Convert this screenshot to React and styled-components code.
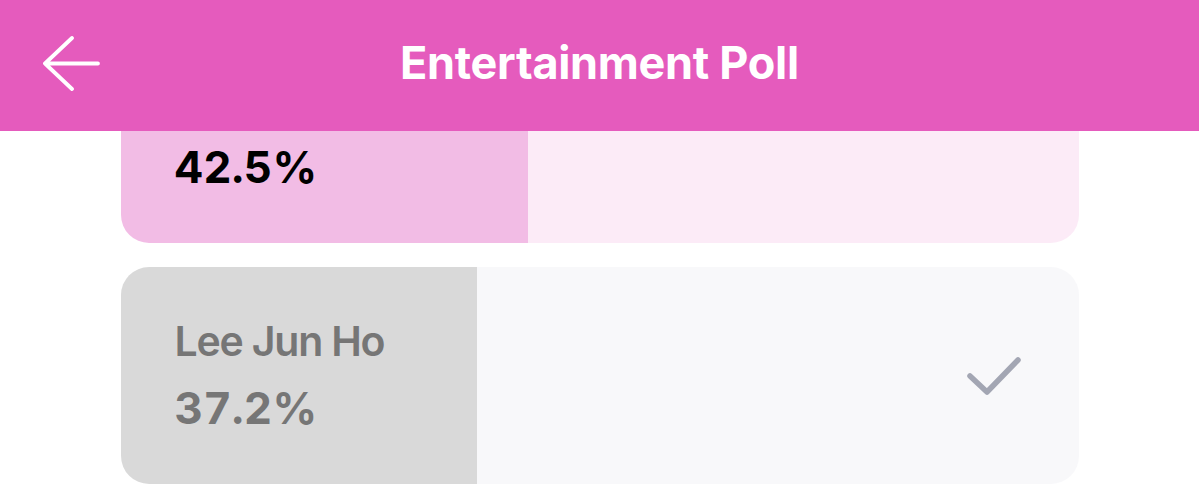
import styled, { createGlobalStyle } from "styled-components";

const GlobalStyle = createGlobalStyle`
    body {
        margin: 0;
        background: #ffffff;
        font-family: Inter, "Noto Sans", sans-serif;
    }
`;

const options = [
    { name: "Kim Soo Hyun", percent: 42.5, selected: true },
    { name: "Lee Jun Ho", percent: 37.2, selected: false },
];

const BackArrow = () => (
    <svg width="59" height="55" viewBox="0 0 59 55" fill="none">
        <path
            d="M2 27.5H55M29 2L2 27.5L29 53"
            stroke="#ffffff"
            strokeWidth="3.8"
            strokeLinecap="round"
            strokeLinejoin="round"
        />
    </svg>
);

const Check = () => (
    <svg width="56" height="40" viewBox="0 0 56 40" fill="none">
        <polyline
            points="4,20 21,36 52,4"
            stroke="#a3a6b3"
            strokeWidth="5.5"
            strokeLinecap="round"
            strokeLinejoin="round"
        />
    </svg>
);

const PollCard = ({ name, percent, selected }) => (
    <Card $percent={percent} $selected={selected}>
        <TextBlock $selected={selected}>
            <Name>{name}</Name>
            <Percent>{percent.toFixed(1)}%</Percent>
        </TextBlock>
        {!selected && <Check />}
    </Card>
);

const App = () => {
    return (
        <>
            <GlobalStyle />
            <Header>
                <BackButton aria-label="Back">
                    <BackArrow />
                </BackButton>
                <Title>Entertainment Poll</Title>
                <span />
            </Header>
            <List>
                {options.map((o) => (
                    <PollCard key={o.name} {...o} />
                ))}
            </List>
        </>
    );
};

export default App;

const Header = styled.header`
    position: fixed;
    top: 0;
    left: 0;
    right: 0;
    z-index: 10;
    height: 131px;
    background: #e55bbd;
    display: grid;
    grid-template-columns: 1fr auto 1fr;
    align-items: center;
`;

const BackButton = styled.button`
    justify-self: start;
    display: flex;
    padding: 0 0 4px 43px;
    border: none;
    background: none;
    cursor: pointer;
`;

const Title = styled.h1`
    margin: 0 0 6px 0;
    color: #ffffff;
    font-size: 45px;
    font-weight: 700;
    letter-spacing: -0.3px;
`;

const List = styled.main`
    display: flex;
    flex-direction: column;
    gap: 24px;
    width: 958px;
    margin: 0 auto;
    padding: 26px 0 12px 0;
`;

const Card = styled.div`
    height: 217px;
    border-radius: 28px;
    display: flex;
    align-items: center;
    justify-content: space-between;
    padding: 0 57px 0 54px;
    box-sizing: border-box;
    background: ${({ $percent, $selected }) => {
        const fill = $selected ? "#f2bce5" : "#d9d9d9";
        const rest = $selected ? "#fcebf7" : "#f8f8fa";
        return `linear-gradient(to right, ${fill} 0 ${$percent}%, ${rest} ${$percent}% 100%)`;
    }};
`;

const TextBlock = styled.div`
    display: flex;
    flex-direction: column;
    line-height: 67px;
    margin-top: -1px;
    color: ${({ $selected }) => ($selected ? "#000000" : "#767676")};
`;

const Name = styled.span`
    font-size: 41px;
    font-weight: 600;
    letter-spacing: -1.2px;
`;

const Percent = styled.span`
    font-size: 44px;
    font-weight: 700;
    font-variant-numeric: tabular-nums;
    letter-spacing: 0.2px;
`;
